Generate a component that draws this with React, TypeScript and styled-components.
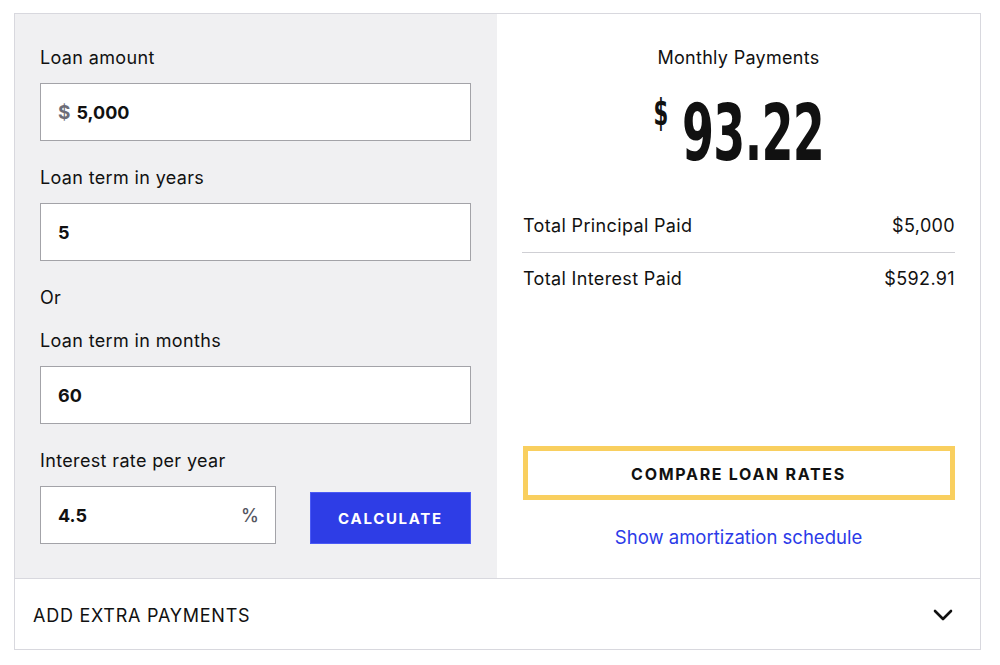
import React from "react";
import styled, { createGlobalStyle } from "styled-components";

const Global = createGlobalStyle`
  html, body { margin: 0; padding: 0; background: #ffffff; }
  body { font-family: Inter, "Noto Sans", sans-serif; color: #111; }
  * { box-sizing: border-box; }
`;

const Card = styled.div`
  margin: 13px 0 0 14px;
  width: 967px;
  border: 1px solid #d8d8de;
  display: flex;
  flex-direction: column;
`;

const Main = styled.div`
  display: grid;
  grid-template-columns: 482px 1fr;
  height: 565px;
  border-bottom: 1px solid #d8d8de;
`;

const Form = styled.div`
  background: #f0f0f2;
  padding: 32px 25px 0 25px;
  display: flex;
  flex-direction: column;
`;

const Label = styled.div<{ $gap?: number }>`
  font-size: 18px;
  line-height: 24px;
  letter-spacing: 0.35px;
  color: #111;
  margin-bottom: ${(p) => p.$gap ?? 13}px;
`;

const Field = styled.div<{ $width?: number }>`
  width: ${(p) => p.$width ?? 431}px;
  height: 58px;
  background: #fff;
  border: 1px solid #a3a3a8;
  display: flex;
  align-items: center;
  padding: 0 16px 0 17px;
  margin-bottom: 25px;
`;

const Prefix = styled.span`
  font-size: 19px;
  font-weight: 700;
  color: #6d6d78;
  margin-right: 6px;
`;

const Value = styled.span`
  font-size: 18px;
  font-weight: 700;
  color: #111;
  flex: 1;
`;

const Suffix = styled.span`
  font-size: 18px;
  font-weight: 500;
  color: #55555f;
`;

const RateRow = styled.div`
  display: flex;
  align-items: flex-end;
  justify-content: space-between;
  width: 431px;
`;

const CalcButton = styled.button`
  width: 161px;
  height: 52px;
  margin-bottom: 25px;
  background: #2e3de6;
  border: 1px solid #4b5af5;
  color: #fff;
  font-family: Inter, sans-serif;
  font-weight: 700;
  font-size: 15px;
  letter-spacing: 1.7px;
  cursor: pointer;
`;

const Results = styled.div`
  background: #fff;
  padding: 32px 25px 29px 25px;
  display: flex;
  flex-direction: column;
`;

const ResultTitle = styled.div`
  font-size: 18px;
  line-height: 24px;
  letter-spacing: 0.3px;
  text-align: center;
  color: #111;
`;

const Amount = styled.div`
  display: flex;
  justify-content: center;
  align-items: flex-start;
  margin-top: 26px;
  height: 104px;
  padding-right: 6px;
`;

const Currency = styled.span`
  font-family: "DejaVu Sans Condensed", "DejaVu Sans", sans-serif;
  font-weight: 700;
  font-size: 38px;
  line-height: 38px;
  display: inline-block;
  transform: scaleX(0.62);
  margin-top: -3px;
  margin-right: 9px;
`;

const Big = styled.span`
  font-family: "DejaVu Sans Condensed", "DejaVu Sans", sans-serif;
  font-weight: 700;
  font-size: 78px;
  line-height: 74px;
  letter-spacing: -1px;
  display: inline-block;
  transform: scaleX(0.655);
  transform-origin: left center;
  width: 140px;
  white-space: nowrap;
`;

const Row = styled.div<{ $line?: boolean }>`
  display: flex;
  justify-content: space-between;
  font-size: 18px;
  line-height: 24px;
  letter-spacing: 0.35px;
  padding: 14px 0 14px 1px;
  border-bottom: ${(p) => (p.$line ? "1px solid #cfcfd4" : "none")};
`;

const Actions = styled.div`
  margin-top: auto;
  display: flex;
  flex-direction: column;
  align-items: center;
  gap: 25px;
`;

const CompareButton = styled.button`
  width: 432px;
  height: 54px;
  padding-top: 2px;
  background: #fff;
  border: 5px solid #f9cf5f;
  font-family: Inter, sans-serif;
  font-weight: 700;
  font-size: 16px;
  letter-spacing: 1.7px;
  color: #111;
  cursor: pointer;
`;

const Link = styled.a`
  font-size: 18.5px;
  line-height: 24px;
  color: #2b3be8;
  text-decoration: none;
  cursor: pointer;
`;

const Footer = styled.div`
  height: 70px;
  display: flex;
  align-items: center;
  justify-content: space-between;
  padding: 2px 27px 0 18px;
`;

const FooterTitle = styled.span`
  font-size: 18px;
  letter-spacing: 0.75px;
  color: #111;
`;

const Chevron = () => (
  <svg width="20" height="14" viewBox="0 0 20 14" fill="none">
    <path d="M2 3 L10 11 L18 3" stroke="#111" strokeWidth="2.6" strokeLinecap="round" strokeLinejoin="round" />
  </svg>
);

export default function App() {
  return (
    <>
      <Global />
      <Card>
        <Main>
          <Form>
            <Label>Loan amount</Label>
            <Field>
              <Prefix>$</Prefix>
              <Value>5,000</Value>
            </Field>
            <Label>Loan term in years</Label>
            <Field>
              <Value>5</Value>
            </Field>
            <Label $gap={19}>Or</Label>
            <Label>Loan term in months</Label>
            <Field>
              <Value>60</Value>
            </Field>
            <Label>Interest rate per year</Label>
            <RateRow>
              <Field $width={236}>
                <Value>4.5</Value>
                <Suffix>%</Suffix>
              </Field>
              <CalcButton>CALCULATE</CalcButton>
            </RateRow>
          </Form>
          <Results>
            <ResultTitle>Monthly Payments</ResultTitle>
            <Amount>
              <Currency>$</Currency>
              <Big>93.22</Big>
            </Amount>
            <Row $line>
              <span>Total Principal Paid</span>
              <span>$5,000</span>
            </Row>
            <Row>
              <span>Total Interest Paid</span>
              <span>$592.91</span>
            </Row>
            <Actions>
              <CompareButton>COMPARE LOAN RATES</CompareButton>
              <Link>Show amortization schedule</Link>
            </Actions>
          </Results>
        </Main>
        <Footer>
          <FooterTitle>ADD EXTRA PAYMENTS</FooterTitle>
          <Chevron />
        </Footer>
      </Card>
    </>
  );
}
